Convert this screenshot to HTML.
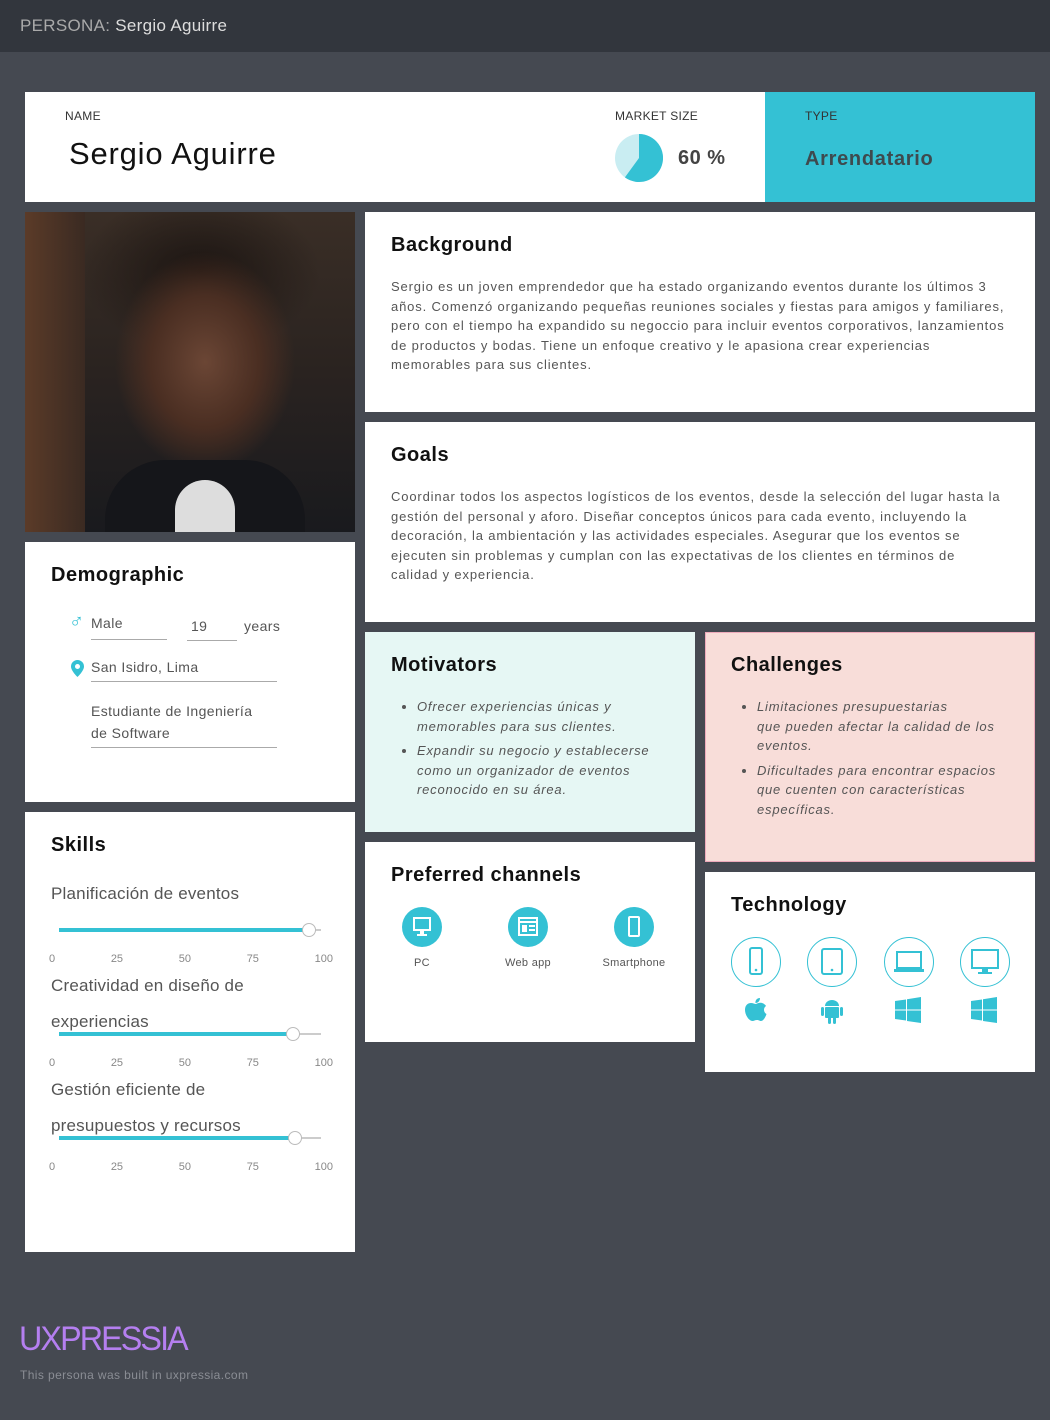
<!DOCTYPE html>
<html><head><meta charset="utf-8"><style>
*{margin:0;padding:0;box-sizing:border-box}
body{width:1050px;height:1420px;background:#454951;font-family:"Liberation Sans",sans-serif;position:relative;overflow:hidden;color:#222}
.a{position:absolute}
.card{position:absolute;background:#fff}
h2{font-size:20px;font-weight:bold;color:#111;position:absolute;letter-spacing:.5px}
p.t{font-size:13px;line-height:19.5px;color:#555;position:absolute;letter-spacing:.85px;white-space:nowrap}
.lbl{font-size:12px;color:#333;position:absolute;letter-spacing:.3px}
ul{position:absolute;font-size:13px;font-style:italic;color:#555;line-height:19.5px;padding-left:26px;letter-spacing:.8px;white-space:nowrap}
ul li{margin-bottom:5px}
.sk{position:absolute;left:26px;font-size:17px;color:#555;letter-spacing:.2px}
.tr{position:absolute;left:34px;width:262px;height:2px;background:#ccc}
.fl{position:absolute;left:0;top:-1px;height:4px;background:#34c1d4}
.kn{position:absolute;top:-6px;width:14px;height:14px;border:1px solid #bbb;border-radius:50%;background:#fff}
.nums{position:absolute;left:24px;width:284px;font-size:11px;color:#888;display:flex;justify-content:space-between}
.ch{position:absolute;text-align:center;width:100px;font-size:11px;color:#555;letter-spacing:.3px}
.ch .c{width:40px;height:40px;border-radius:50%;background:#34c1d4;margin:0 auto 10px}
.tc{position:absolute;width:50px;height:50px;border:1px solid #34c1d4;border-radius:50%}
.dm{font-size:14px;color:#555;letter-spacing:.4px}
</style></head><body>
<div class="a" style="left:0;top:0;width:1050px;height:52px;background:#32363d"></div>
<div class="a" style="left:20px;top:16px;font-size:17px;color:#ddd;letter-spacing:.3px"><span style="color:#aaa">PERSONA:</span> Sergio Aguirre</div>

<div class="card" style="left:25px;top:92px;width:740px;height:110px"></div>
<div class="lbl" style="left:65px;top:109px">NAME</div>
<div class="a" style="left:69px;top:136px;font-size:31px;color:#111;letter-spacing:.8px">Sergio Aguirre</div>
<div class="lbl" style="left:615px;top:109px">MARKET SIZE</div>
<svg class="a" style="left:615px;top:134px" width="48" height="48" viewBox="0 0 48 48"><circle cx="24" cy="24" r="24" fill="#c9edf2"/><path d="M24 24 V0 A24 24 0 1 1 9.9 43.4 Z" fill="#34c1d4"/></svg>
<div class="a" style="left:678px;top:147px;font-size:20px;font-weight:bold;color:#444;letter-spacing:.5px">60 %</div>
<div class="a" style="left:765px;top:92px;width:270px;height:110px;background:#34c1d4"></div>
<div class="lbl" style="left:805px;top:109px">TYPE</div>
<div class="a" style="left:805px;top:148px;font-size:20px;font-weight:bold;color:#3e4a4e;letter-spacing:.7px">Arrendatario</div>

<div class="a" style="left:25px;top:212px;width:330px;height:320px;background:radial-gradient(ellipse 90px 110px at 180px 150px,#6b4635 0%,#4a2e22 60%,transparent 100%),radial-gradient(ellipse 120px 80px at 175px 60px,#1c1512 0%,transparent 100%),linear-gradient(180deg,#3a2e26 0%,#2a2320 50%,#191a1e 100%)"></div>
<div class="a" style="left:25px;top:212px;width:60px;height:320px;background:linear-gradient(90deg,#5b3b28,#3a2a22)"></div>
<div class="a" style="left:105px;top:460px;width:200px;height:72px;background:#15161a;border-radius:60px 60px 0 0"></div>
<div class="a" style="left:175px;top:480px;width:60px;height:52px;background:#ddd;border-radius:30px 30px 0 0"></div>

<div class="card" style="left:365px;top:212px;width:670px;height:200px"></div>
<h2 style="left:391px;top:234px">Background</h2>
<p class="t" style="left:391px;top:277px">Sergio es un joven emprendedor que ha estado organizando eventos durante los últimos 3<br>años. Comenzó organizando pequeñas reuniones sociales y fiestas para amigos y familiares,<br>pero con el tiempo ha expandido su negoccio para incluir eventos corporativos, lanzamientos<br>de productos y bodas. Tiene un enfoque creativo y le apasiona crear experiencias<br>memorables para sus clientes.</p>

<div class="card" style="left:365px;top:422px;width:670px;height:200px"></div>
<h2 style="left:391px;top:444px">Goals</h2>
<p class="t" style="left:391px;top:487px">Coordinar todos los aspectos logísticos de los eventos, desde la selección del lugar hasta la<br>gestión del personal y aforo. Diseñar conceptos únicos para cada evento, incluyendo la<br>decoración, la ambientación y las actividades especiales. Asegurar que los eventos se<br>ejecuten sin problemas y cumplan con las expectativas de los clientes en términos de<br>calidad y experiencia.</p>

<div class="card" style="left:25px;top:542px;width:330px;height:260px"></div>
<h2 style="left:51px;top:564px">Demographic</h2>
<div class="a" style="left:69px;top:611px;font-size:20px;color:#34c1d4">♂</div>
<div class="a dm" style="left:91px;top:615px;width:76px;border-bottom:1px solid #aaa;padding-bottom:8px">Male</div>
<div class="a dm" style="left:187px;top:618px;width:50px;border-bottom:1px solid #aaa;padding-bottom:6px;padding-left:4px">19</div>
<div class="a dm" style="left:244px;top:618px">years</div>
<svg class="a" style="left:71px;top:660px" width="13" height="17" viewBox="0 0 13 17"><path d="M6.5 0A6.5 6.5 0 0 0 0 6.5C0 11 6.5 17 6.5 17S13 11 13 6.5A6.5 6.5 0 0 0 6.5 0Z" fill="#34c1d4"/><circle cx="6.5" cy="6.5" r="2.5" fill="#fff"/></svg>
<div class="a dm" style="left:91px;top:659px;width:186px;border-bottom:1px solid #aaa;padding-bottom:6px">San Isidro, Lima</div>
<div class="a dm" style="left:91px;top:700px;width:186px;border-bottom:1px solid #aaa;padding-bottom:3px;line-height:22px;padding-right:10px">Estudiante de Ingeniería de Software</div>

<div class="card" style="left:25px;top:812px;width:330px;height:440px"></div>
<h2 style="left:51px;top:834px">Skills</h2>
<div class="a" style="left:25px;top:812px;width:330px;height:440px">
<div class="sk" style="top:72px">Planificación de eventos</div>
<div class="tr" style="top:117px"><div class="fl" style="width:250px"></div><div class="kn" style="left:243px"></div></div>
<div class="nums" style="top:141px"><span>0</span><span>25</span><span>50</span><span>75</span><span>100</span></div>
<div class="sk" style="top:156px;line-height:36px">Creatividad en diseño de<br>experiencias</div>
<div class="tr" style="top:221px"><div class="fl" style="width:234px"></div><div class="kn" style="left:227px"></div></div>
<div class="nums" style="top:245px"><span>0</span><span>25</span><span>50</span><span>75</span><span>100</span></div>
<div class="sk" style="top:260px;line-height:36px">Gestión eficiente de<br>presupuestos y recursos</div>
<div class="tr" style="top:325px"><div class="fl" style="width:236px"></div><div class="kn" style="left:229px"></div></div>
<div class="nums" style="top:349px"><span>0</span><span>25</span><span>50</span><span>75</span><span>100</span></div>
</div>

<div class="a" style="left:365px;top:632px;width:330px;height:200px;background:#e6f7f4"></div>
<h2 style="left:391px;top:654px">Motivators</h2>
<ul style="left:391px;top:697px"><li>Ofrecer experiencias únicas y<br>memorables para sus clientes.</li><li>Expandir su negocio y establecerse<br>como un organizador de eventos<br>reconocido en su área.</li></ul>

<div class="a" style="left:705px;top:632px;width:330px;height:230px;background:#f8ddd9;border:1px solid #eab"></div>
<h2 style="left:731px;top:654px">Challenges</h2>
<ul style="left:731px;top:697px"><li>Limitaciones presupuestarias<br>que pueden afectar la calidad de los<br>eventos.</li><li>Dificultades para encontrar espacios<br>que cuenten con características<br>específicas.</li></ul>

<div class="card" style="left:365px;top:842px;width:330px;height:200px"></div>
<h2 style="left:391px;top:864px">Preferred channels</h2>
<div class="ch" style="left:372px;top:907px"><div class="c"><svg width="40" height="40"><rect x="12" y="11" width="16" height="12" fill="none" stroke="#fff" stroke-width="2"/><rect x="18" y="23" width="4" height="4" fill="#fff"/><rect x="15" y="27" width="10" height="2" fill="#fff"/></svg></div>PC</div>
<div class="ch" style="left:478px;top:907px"><div class="c"><svg width="40" height="40"><rect x="11" y="11" width="18" height="17" fill="none" stroke="#fff" stroke-width="2"/><rect x="11" y="14" width="18" height="2" fill="#fff"/><rect x="14" y="18" width="5" height="7" fill="#fff"/><rect x="21" y="18" width="6" height="2" fill="#fff"/><rect x="21" y="22" width="6" height="2" fill="#fff"/></svg></div>Web app</div>
<div class="ch" style="left:584px;top:907px"><div class="c"><svg width="40" height="40"><rect x="15" y="10" width="10" height="19" rx="1" fill="none" stroke="#fff" stroke-width="2"/></svg></div>Smartphone</div>

<div class="card" style="left:705px;top:872px;width:330px;height:200px"></div>
<h2 style="left:731px;top:894px">Technology</h2>
<div class="tc" style="left:731px;top:937px"><svg width="48" height="48"><rect x="18" y="10" width="12" height="26" rx="2" fill="none" stroke="#34c1d4" stroke-width="2"/><circle cx="24" cy="32" r="1.3" fill="#34c1d4"/></svg></div>
<div class="tc" style="left:807px;top:937px"><svg width="48" height="48"><rect x="14" y="11" width="20" height="25" rx="2" fill="none" stroke="#34c1d4" stroke-width="2"/><circle cx="24" cy="32" r="1.3" fill="#34c1d4"/></svg></div>
<div class="tc" style="left:884px;top:937px"><svg width="48" height="48"><rect x="12" y="14" width="24" height="16" fill="none" stroke="#34c1d4" stroke-width="2"/><rect x="9" y="31" width="30" height="3" fill="#34c1d4"/></svg></div>
<div class="tc" style="left:960px;top:937px"><svg width="48" height="48"><rect x="11" y="12" width="26" height="18" fill="none" stroke="#34c1d4" stroke-width="2"/><rect x="21" y="31" width="6" height="3" fill="#34c1d4"/><rect x="17" y="34" width="14" height="2" fill="#34c1d4"/></svg></div>
<svg class="a" style="left:743px;top:996px" width="26" height="30" viewBox="0 0 26 30"><path d="M17 2c0 3-2 5-4.5 5C12 4 14.5 2 17 2ZM13 8c2-1 4-1.5 6-1 2 .5 3.5 2 4 3-2.5 1.5-3 6 .5 8-1 3-3 7-5.5 7-1.5 0-2-1-4-1s-3 1-4.5 1C6 25 2 19 2 14s3-7 6-7c2 0 3.5 1 5 1Z" fill="#34c1d4"/></svg>
<svg class="a" style="left:819px;top:996px" width="26" height="30" viewBox="0 0 26 30"><path d="M6 10a7 6 0 0 1 14 0Z" fill="#34c1d4"/><rect x="6" y="11" width="14" height="11" rx="1" fill="#34c1d4"/><rect x="2" y="11" width="3" height="9" rx="1.5" fill="#34c1d4"/><rect x="21" y="11" width="3" height="9" rx="1.5" fill="#34c1d4"/><rect x="9" y="21" width="3" height="7" rx="1.5" fill="#34c1d4"/><rect x="14" y="21" width="3" height="7" rx="1.5" fill="#34c1d4"/></svg>
<svg class="a" style="left:895px;top:997px" width="26" height="28" viewBox="0 0 26 28"><path d="M0 4l11-1.5v10H0ZM12 2.3L26 0v12.5H12ZM0 13.5h11v10L0 22ZM12 13.5h14V26l-14-2Z" fill="#34c1d4"/></svg>
<svg class="a" style="left:971px;top:997px" width="26" height="28" viewBox="0 0 26 28"><path d="M0 4l11-1.5v10H0ZM12 2.3L26 0v12.5H12ZM0 13.5h11v10L0 22ZM12 13.5h14V26l-14-2Z" fill="#34c1d4"/></svg>

<div class="a" style="left:19px;top:1320px;font-size:34px;color:#b57ff0;letter-spacing:-2px;transform:scaleX(.95);transform-origin:left">UXPRESSIA</div>
<div class="a" style="left:20px;top:1368px;font-size:12px;color:#8a8d94;letter-spacing:.4px">This persona was built in uxpressia.com</div>
</body></html>
